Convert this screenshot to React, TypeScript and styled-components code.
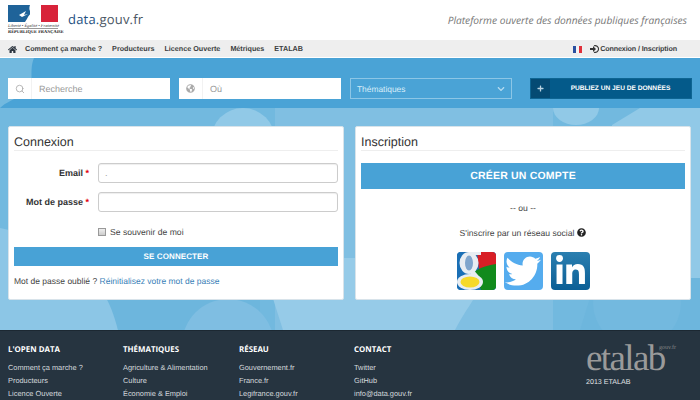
import React from "react";
import styled, { createGlobalStyle } from "styled-components";
import { FaChevronDown, FaGlobeAmericas, FaHome, FaLinkedinIn, FaPlus, FaQuestionCircle, FaTwitter } from "react-icons/fa";
import { Search } from "lucide-react";

const GlobalStyle = createGlobalStyle`
  html, body {
    margin: 0;
    height: 400px;
    overflow: hidden;
    background: #fff;
    font-family: "Liberation Sans", Arial, sans-serif;
    color: #333;
    text-rendering: geometricPrecision;
  }
`;

const Header = styled.header`
  display: flex;
  align-items: center;
  height: 40px;
  padding: 0 13px 0 8px;
  background: #fff;
`;

const Logo = styled.div`
  width: 50px;
  margin-right: 10px;
  display: flex;
  flex-direction: column;
`;

const LogoMotto = styled.span`
  font-family: "Liberation Serif", serif;
  font-style: italic;
  font-size: 4.4px;
  line-height: 5px;
  color: #333;
  white-space: nowrap;
  text-align: center;
`;

const LogoName = styled.span`
  font-family: "Liberation Serif", serif;
  font-size: 4.4px;
  font-weight: bold;
  line-height: 6px;
  border-top: 1px solid #999;
  color: #222;
  white-space: nowrap;
  text-align: center;
`;

const Brand = styled.div`
  font-family: "Open Sans", sans-serif;
  font-size: 13px;
  letter-spacing: 0.2px;
  color: #4a5663;
  margin-top: -2px;

  span {
    color: #24507f;
  }
`;

const Tagline = styled.div`
  margin-left: auto;
  font-family: "Open Sans", sans-serif;
  font-style: italic;
  font-size: 10.2px;
  color: #777;
`;

const Nav = styled.nav`
  display: flex;
  align-items: center;
  height: 16px;
  padding: 1px 23px 0 8px;
  background: #eee;
  border-bottom: 1px solid #fff;
  font-size: 7.2px;
  line-height: 10px;
  font-weight: bold;
  color: #3c3f42;
`;

const NavLink = styled.span<{ $gap?: number }>`
  margin-left: ${(p) => p.$gap ?? 10}px;
  white-space: nowrap;
`;

const AccountLink = styled.span`
  white-space: nowrap;
  letter-spacing: -0.13px;
`;

const NavSpacer = styled.div`
  flex: 1;
`;

const Hero = styled.main`
  position: relative;
  height: 272px;
  background: #4aa3d6;
  overflow: hidden;
`;

const HeroArt = styled.svg`
  position: absolute;
  left: 0;
  top: 0;
`;

const SearchRow = styled.div`
  position: relative;
  display: flex;
  align-items: stretch;
  height: 21px;
  padding: 20px 8px 0;
`;

const SearchBox = styled.div`
  display: flex;
  align-items: center;
  width: 162px;
  margin-right: 9px;
  background: #fff;
  font-size: 9px;
  color: #999;
`;

const SearchIcon = styled.div`
  display: flex;
  align-items: center;
  justify-content: center;
  width: 23px;
  height: 100%;
  border-right: 1px solid #f2f2f2;
  color: #aaa;
  margin-right: 7px;
`;

const ThemeSelect = styled.div`
  display: flex;
  align-items: center;
  justify-content: space-between;
  box-sizing: border-box;
  width: 162px;
  margin-right: 18px;
  padding: 0 6px 0 6px;
  border: 1px solid #8cc6e6;
  font-size: 8.4px;
  color: #d8edf8;
`;

const PublishButton = styled.div`
  display: flex;
  align-items: stretch;
  width: 162px;
  background: #045a8a;
  border: 1px solid #0e6593;
  box-sizing: border-box;
  color: #fff;
  font-size: 6.6px;
  font-weight: bold;
`;

const PublishIcon = styled.div`
  display: flex;
  align-items: center;
  justify-content: center;
  width: 19px;
  background: #044a73;
  color: #b9d2e0;
`;

const PublishLabel = styled.div`
  flex: 1;
  display: flex;
  align-items: center;
  justify-content: center;
`;

const Cards = styled.div`
  position: relative;
  display: grid;
  grid-template-columns: 336px 336px;
  gap: 11px;
  padding: 27px 8px 0 8px;
`;

const Card = styled.section`
  box-sizing: border-box;
  height: 174px;
  padding: 7px 5px;
  background: #fff;
  border: 1px solid #d8e3ea;
  border-radius: 2px;
`;

const CardTitle = styled.h2`
  margin: 0 0 12px;
  height: 16px;
  font-size: 12.5px;
  line-height: 17px;
  font-weight: normal;
  color: #333;
  border-bottom: 1px solid #eee;
`;

const FormRow = styled.div`
  display: grid;
  grid-template-columns: 84px 240px;
  align-items: center;
  height: 20px;
  margin-bottom: 9px;
`;

const FieldLabel = styled.label`
  text-align: right;
  padding-right: 9px;
  font-size: 9px;
  font-weight: bold;
  color: #333;

  em {
    font-style: normal;
    color: #e2000f;
  }
`;

const TextInput = styled.div`
  box-sizing: border-box;
  height: 20px;
  background: #fff;
  border: 1px solid #ccc;
  border-radius: 3px;
  box-shadow: inset 0 1px 1px rgba(0, 0, 0, 0.07);
  font-size: 9px;
  color: #999;
  padding-left: 6px;
  line-height: 19px;
`;

const RememberRow = styled.div`
  display: flex;
  align-items: center;
  height: 12px;
  margin: 14px 0 9px 84px;
  font-size: 8.6px;
  color: #444;
`;

const CheckBox = styled.span`
  box-sizing: border-box;
  width: 8px;
  height: 8px;
  margin-right: 4px;
  background: linear-gradient(#eee, #ccc);
  border: 1px solid #999;
`;

const PrimaryButton = styled.div<{ $tall?: boolean }>`
  display: flex;
  align-items: center;
  justify-content: center;
  height: ${(p) => (p.$tall ? 26 : 19)}px;
  background: #48a2d6;
  color: #fff;
  font-weight: bold;
  font-size: ${(p) => (p.$tall ? 10.5 : 8)}px;
  letter-spacing: ${(p) => (p.$tall ? 0.2 : 0.1)}px;
`;

const ForgotLine = styled.div`
  margin-top: 10px;
  font-size: 8.5px;
  color: #444;

  a {
    color: #3a7fb8;
    text-decoration: none;
  }
`;

const CenterLine = styled.div<{ $top: number }>`
  display: flex;
  align-items: center;
  justify-content: center;
  gap: 3px;
  margin-top: ${(p) => p.$top}px;
  height: 11px;
  font-size: 8.6px;
  color: #444;
`;

const SocialRow = styled.div`
  display: flex;
  justify-content: center;
  gap: 8px;
  margin-top: 14px;
`;

const SocialTile = styled.div<{ $bg: string }>`
  display: flex;
  align-items: center;
  justify-content: center;
  width: 39px;
  height: 38px;
  border-radius: 4px;
  background: ${(p) => p.$bg};
  color: #fff;
  overflow: hidden;
`;

const Footer = styled.footer`
  display: grid;
  grid-template-columns: 115px 116px 115px 232px 1fr;
  height: 70px;
  padding: 13px 0 0 8px;
  box-sizing: border-box;
  background: #263440;
  border-top: 1px solid #1c2832;
  overflow: hidden;
`;

const FooterTitle = styled.div`
  font-family: "Open Sans", sans-serif;
  font-weight: 700;
  font-size: 7.9px;
  line-height: 12px;
  color: #fff;
  margin-bottom: 5px;
`;

const FooterLink = styled.div`
  font-size: 7.4px;
  line-height: 13px;
  color: #d5dade;
  white-space: nowrap;
`;

const EtalabLogo = styled.div`
  position: relative;
  margin-top: -1px;
  width: 92px;
  height: 32px;
  font-family: "Liberation Serif", serif;
  font-size: 37px;
  line-height: 32px;
  color: #9a9a9a;
  letter-spacing: -1.6px;

  small {
    position: absolute;
    right: 2px;
    top: 2px;
    font-size: 6px;
    line-height: 7px;
    letter-spacing: 0;
    color: #8b8b8b;
  }
`;

const Copyright = styled.div`
  margin-top: 3px;
  font-size: 7.1px;
  color: #e3e6e8;
`;

const GoogleIcon = () => (
  <svg width="39" height="38" viewBox="0 0 39 38">
    <rect width="39" height="38" fill="#1a6fb5" />
    <path d="M20 0H39V13L22 17Z" fill="#d81f26" />
    <path d="M17 20C24 15 32 13 39 12V38H24Z" fill="#118a1c" />
    <ellipse cx="12" cy="11" rx="9.5" ry="11" fill="#e8edf2" />
    <ellipse cx="12" cy="11" rx="4" ry="7.5" fill="#7fa5cc" />
    <rect x="12" y="0" width="12" height="3" fill="#e8edf2" />
    <path d="M15 20L21 27" stroke="#e8edf2" strokeWidth="5" />
    <ellipse cx="13" cy="30" rx="13" ry="8" fill="#e8edf2" />
    <ellipse cx="13" cy="30" rx="9.5" ry="5.5" fill="#f6d92a" />
  </svg>
);

const App = () => (
  <>
    <GlobalStyle />
    <Header>
      <Logo>
        <svg width="50" height="18" viewBox="0 0 50 18">
          <rect width="22" height="17" fill="#1f6399" />
          <rect x="33" width="17" height="17" fill="#d8233a" />
          <path d="M22 0H28C27 3 31 5 31 8L33 9L31 11C32 14 30 15 27 15L25 17H17C20 13 20 10 24 8C21 6 21 3 22 0Z" fill="#fff" />
          <path d="M11 10L18 6L16 10L20 9L14 12Z" fill="#fff" />
        </svg>
        <LogoMotto>Liberté • Égalité • Fraternité</LogoMotto>
        <LogoName>RÉPUBLIQUE FRANÇAISE</LogoName>
      </Logo>
      <Brand>
        <span>data.</span>gouv.fr
      </Brand>
      <Tagline>Plateforme ouverte des données publiques françaises</Tagline>
    </Header>
    <Nav>
      <FaHome size={9} color="#2d3640" />
      <NavLink $gap={8}>Comment ça marche ?</NavLink>
      <NavLink>Producteurs</NavLink>
      <NavLink>Licence Ouverte</NavLink>
      <NavLink>Métriques</NavLink>
      <NavLink>ETALAB</NavLink>
      <NavSpacer />
      <svg width="9" height="7" viewBox="0 0 9 7">
        <rect width="3" height="7" fill="#2a4fa0" />
        <rect x="3" width="3" height="7" fill="#f4f4f4" />
        <rect x="6" width="3" height="7" fill="#e0303a" />
      </svg>
      <svg width="10" height="8" viewBox="0 0 10 8" style={{ marginLeft: 8 }}>
        <path d="M0 3H3V1L6 4L3 7V5H0Z" fill="#333" />
        <path d="M4 0.8A3.4 3.4 0 1 1 4 7.2" fill="none" stroke="#333" strokeWidth="1.1" />
      </svg>
      <AccountLink>Connexion / Inscription</AccountLink>
    </Nav>
    <Hero>
      <HeroArt width="700" height="272" viewBox="0 0 700 272">
        <rect y="50" width="700" height="222" fill="#72b9df" />
        <path d="M0 0H34C28 14 36 28 26 34C14 42 6 44 0 50Z" fill="#72b9df" />
        <circle cx="243" cy="82" r="32" fill="#91c9e7" />
        <path d="M275 50H553V272H275Z" fill="#80bfe2" />
        <path d="M553 50A23 17 0 0 0 599 50Z" fill="#91c9e7" />
        <path d="M612 67L640 50H700V220H612Z" fill="#91c9e7" />
        <path d="M0 170L90 190C108 225 116 250 118 272H0Z" fill="#8cc6e6" />
        <path d="M260 200L283 272H455C460 262 468 250 473 242L490 200Z" fill="#96cbe8" />
        <path d="M596 220L580 272H700V220Z" fill="#6db6dd" />
        <circle cx="637" cy="245" r="44" fill="#73b9df" />
        <path d="M118 272C110 240 100 230 90 220H260V272Z" fill="#6db6dd" />
        <circle cx="228" cy="287" r="46" fill="#7fbee2" />
      </HeroArt>
      <SearchRow>
        <SearchBox>
          <SearchIcon>
            <Search size={10} />
          </SearchIcon>
          Recherche
        </SearchBox>
        <SearchBox>
          <SearchIcon>
            <FaGlobeAmericas size={9} />
          </SearchIcon>
          Où
        </SearchBox>
        <ThemeSelect>
          Thématiques
          <FaChevronDown size={8} color="#b5dbf0" />
        </ThemeSelect>
        <PublishButton>
          <PublishIcon>
            <FaPlus size={7} />
          </PublishIcon>
          <PublishLabel>PUBLIEZ UN JEU DE DONNÉES</PublishLabel>
        </PublishButton>
      </SearchRow>
      <Cards>
        <Card>
          <CardTitle>Connexion</CardTitle>
          <FormRow>
            <FieldLabel>
              Email <em>*</em>
            </FieldLabel>
            <TextInput>.</TextInput>
          </FormRow>
          <FormRow>
            <FieldLabel>
              Mot de passe <em>*</em>
            </FieldLabel>
            <TextInput />
          </FormRow>
          <RememberRow>
            <CheckBox />
            Se souvenir de moi
          </RememberRow>
          <PrimaryButton>SE CONNECTER</PrimaryButton>
          <ForgotLine>
            Mot de passe oublié ? <a>Réinitialisez votre mot de passe</a>
          </ForgotLine>
        </Card>
        <Card>
          <CardTitle>Inscription</CardTitle>
          <PrimaryButton $tall>CRÉER UN COMPTE</PrimaryButton>
          <CenterLine $top={13}>-- ou --</CenterLine>
          <CenterLine $top={14}>
            S'inscrire par un réseau social <FaQuestionCircle size={9} color="#222" />
          </CenterLine>
          <SocialRow>
            <SocialTile $bg="#1a6fb5">
              <GoogleIcon />
            </SocialTile>
            <SocialTile $bg="#55acee">
              <FaTwitter size={36} />
            </SocialTile>
            <SocialTile $bg="linear-gradient(#2b7fb0, #0b5f96)">
              <FaLinkedinIn size={33} />
            </SocialTile>
          </SocialRow>
        </Card>
      </Cards>
    </Hero>
    <Footer>
      <div>
        <FooterTitle>L'OPEN DATA</FooterTitle>
        <FooterLink>Comment ça marche ?</FooterLink>
        <FooterLink>Producteurs</FooterLink>
        <FooterLink>Licence Ouverte</FooterLink>
      </div>
      <div>
        <FooterTitle>THÉMATIQUES</FooterTitle>
        <FooterLink>Agriculture &amp; Alimentation</FooterLink>
        <FooterLink>Culture</FooterLink>
        <FooterLink>Économie &amp; Emploi</FooterLink>
      </div>
      <div>
        <FooterTitle>RÉSEAU</FooterTitle>
        <FooterLink>Gouvernement.fr</FooterLink>
        <FooterLink>France.fr</FooterLink>
        <FooterLink>Legifrance.gouv.fr</FooterLink>
      </div>
      <div>
        <FooterTitle>CONTACT</FooterTitle>
        <FooterLink>Twitter</FooterLink>
        <FooterLink>GitHub</FooterLink>
        <FooterLink>info@data.gouv.fr</FooterLink>
      </div>
      <div>
        <EtalabLogo>
          etalab<small>gouv.fr</small>
        </EtalabLogo>
        <Copyright>2013 ETALAB</Copyright>
      </div>
    </Footer>
  </>
);

export default App;
